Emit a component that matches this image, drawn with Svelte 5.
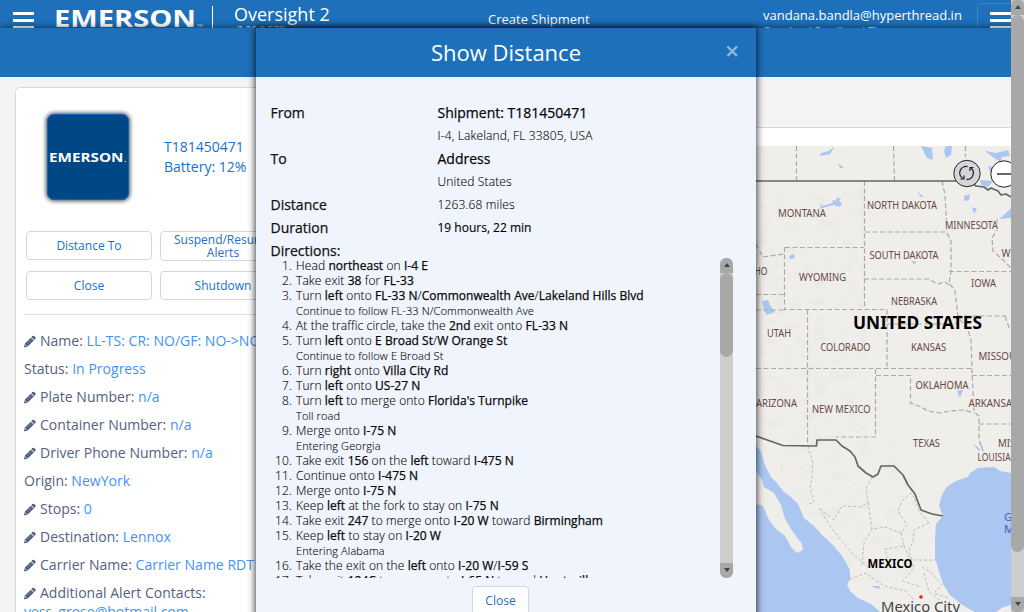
<script>
  const fields = [
    { label: 'Name:', value: 'LL-TS: CR: NO/GF: NO->NO', edit: true },
    { label: 'Status:', value: 'In Progress', edit: false },
    { label: 'Plate Number:', value: 'n/a', edit: true },
    { label: 'Container Number:', value: 'n/a', edit: true },
    { label: 'Driver Phone Number:', value: 'n/a', edit: true },
    { label: 'Origin:', value: 'NewYork', edit: false },
    { label: 'Stops:', value: '0', edit: true },
    { label: 'Destination:', value: 'Lennox', edit: true },
    { label: 'Carrier Name:', value: 'Carrier Name RDT1', edit: true },
    { label: 'Additional Alert Contacts:', value: '', edit: true }
  ];

  // Odd segments (between asterisks) are emphasised.
  const directions = [
    ['Head *northeast* on *I-4 E*'],
    ['Take exit *38* for *FL-33*'],
    ['Turn *left* onto *FL-33 N*/*Commonwealth Ave*/*Lakeland Hills Blvd*', 'Continue to follow FL-33 N/Commonwealth Ave'],
    ['At the traffic circle, take the *2nd* exit onto *FL-33 N*'],
    ['Turn *left* onto *E Broad St*/*W Orange St*', 'Continue to follow E Broad St'],
    ['Turn *right* onto *Villa City Rd*'],
    ['Turn *left* onto *US-27 N*'],
    ["Turn *left* to merge onto *Florida's Turnpike*", 'Toll road'],
    ['Merge onto *I-75 N*', 'Entering Georgia'],
    ['Take exit *156* on the *left* toward *I-475 N*'],
    ['Continue onto *I-475 N*'],
    ['Merge onto *I-75 N*'],
    ['Keep *left* at the fork to stay on *I-75 N*'],
    ['Take exit *247* to merge onto *I-20 W* toward *Birmingham*'],
    ['Keep *left* to stay on *I-20 W*', 'Entering Alabama'],
    ['Take the exit on the *left* onto *I-20 W*/*I-59 S*'],
    ['Take exit *124C* to merge onto *I-65 N* toward *Huntsville*']
  ].map(([t, note]) => ({ parts: t.split('*'), note }));

  const places = [
    ['MONTANA', 778, 217, 48], ['NORTH DAKOTA', 867, 209, 70], ['MINNESOTA', 945, 229, 53],
    ['SOUTH DAKOTA', 869.5, 259, 69], ['WYOMING', 799, 281, 47], ['IOWA', 971, 287, 25],
    ['NEBRASKA', 891, 305, 46], ['UTAH', 767, 337, 24], ['COLORADO', 820.5, 351, 50],
    ['KANSAS', 911, 351, 35], ['MISSOURI', 978.5, 359.5, 47], ['OKLAHOMA', 915.5, 389, 53],
    ['ARIZONA', 756, 407, 41], ['NEW MEXICO', 812, 413, 58.5], ['ARKANSAS', 968.5, 407, 49],
    ['TEXAS', 913, 447, 27], ['MISSISSIPPI', 998, 447, 55], ['LOUISIANA', 977.5, 461, 45],
    ['IDAHO', 740, 275, 27.5], ['WISCONSIN', 1001.5, 257, 54]
  ];
</script>

{#snippet wordmark(w)}
  <text x="0" y="19" textLength={w} lengthAdjust="spacingAndGlyphs" fill="#fff" font-family="Open Sans, sans-serif" font-weight="700" font-size="23.5">EMERSON</text>
{/snippet}

{#snippet pencil()}
  <svg class="pencil" width="12" height="13" viewBox="0 0 12 13">
    <path fill="#4f5d84" d="M8.4 1.1 Q9.2 .4 10.1 1 L11.4 2.3 Q12 3.1 11.3 3.9 L10.3 4.9 L7.3 2.1Z M6.8 2.7 L9.8 5.5 L3.6 11.4 L0 12.5 L.9 8.5Z"/>
    <path d="M1.4 9.6 L2.7 11" stroke="#fff" stroke-width=".8" fill="none"/>
    <path d="M3 8.4 L7.3 4.3" stroke="#a9b1c8" stroke-width=".6" fill="none"/>
  </svg>
{/snippet}

<div class="page">
  <header>
    <div class="burger"><i></i><i></i><i></i></div>
    <svg class="logo" width="150" height="28" viewBox="0 -8 150 28">
      {@render wordmark(142)}
      <text x="143" y="19" fill="#cfe0f2" font-family="Open Sans, sans-serif" font-size="4">TM</text>
    </svg>
    <span class="rule"></span>
    <div class="product"><span>Oversight 2</span><small>2.26.0.578</small></div>
    <div class="title">Create Shipment</div>
    <div class="user"><span>vandana.bandla@hyperthread.in</span><small>Copeland Scroll and Therm</small></div>
    <div class="menu"><div class="burger"><i></i><i></i><i></i></div></div>
  </header>
  <div class="band"></div>

  <main>
    <section class="card">
      <div class="asset">
        <div class="badge"><svg width="78" height="11" viewBox="0 0 155 21" preserveAspectRatio="none">
          {@render wordmark(148)}<circle cx="152" cy="18" r="1.5" fill="#bcd"/>
        </svg></div>
        <div class="ident"><span>T181450471</span><span>Battery: 12%</span></div>
      </div>
      <div class="actions">
        <button>Distance To</button><button class="two">Suspend/Resume Alerts</button>
        <button>Close</button><button>Shutdown</button>
      </div>
      <div class="fields">
        {#each fields as f}
          <div class="field">{#if f.edit}{@render pencil()}{/if}<span>{f.label}</span>&nbsp;<b>{f.value}</b></div>
        {/each}
        <b class="mail">yess_grose@hotmail.com</b>
      </div>
    </section>

    <section class="mapside">
      <svg class="map" width="255" height="466" viewBox="756 146 255 466">
        <defs>
          <filter id="relief" x="0" y="0" width="100%" height="100%">
            <feTurbulence type="fractalNoise" baseFrequency=".07 .11" numOctaves="3" seed="4"/>
            <feColorMatrix values="0 0 0 0 .6  0 0 0 0 .6  0 0 0 0 .58  1.5 0 0 0 -.72"/>
          </filter>
        </defs>
        <rect x="756" y="146" width="255" height="466" fill="#efeeeb"/>
        <rect x="756" y="190" width="110" height="250" filter="url(#relief)" opacity=".3"/>
        <rect x="780" y="440" width="135" height="150" filter="url(#relief)" opacity=".25"/>
        <g fill="#aac6f1">
          <path d="M756 446 L761 451 L764 463 L771 477 L776 482 L784 492 L791 497 L798 504 L804 518 L814 526 L822 535 L832 544 L842 556 L850 570 L850 580 L847 584 L850 591 L858 598 L871 604 L880 612 L756 612Z"/>
          <path d="M1011 473 L1000 471 L994 467 L978 468 L970 473 L968 477 L956 481 L948 486 L944 491 L941 498 L939 506 L943 516 L936 524 L935 540 L935 558 L939 571 L943 584 L950 595 L961 604 L971 610 L975 612 L996 612 L1003 607 L1011 605Z"/>
          <path d="M820 156 L830 154 L835 146 L829 151 L821 153Z M921 146 L932 148 L933 160 L927 158Z M946 146 L952 146 L951 155 L946 158 L944 151Z M965 161 L971 162 L978 168 L970 167Z M985 151 L996 153 L1008 150 L1010 156 L1002 157 L1001 162 L994 158Z M988 166 L997 168 L990 172Z M980 180 L993 181 L988 187 L981 185Z M838 163 L844 168 L840 168Z"/>
          <path d="M816 210 L821 207 L820 202 L822 206 L833 203 L832 200 L836 201 L837 197 L841 199 L839 201 L842 204 L840 207 L833 205 L820 209Z M964 196 L970 194 L969 200 L964 201Z M972 207 L977 209 L974 214Z M1011 208 L1005 214 L999 219 L1011 218Z M789 256 L794 254 L795 258 L790 259Z M762 301 L768 300 L770 305 L775 312 L767 315 L764 311Z M764 310 L772 310 L768 314Z M917 191 L924 197 L921 197Z M911 261 L916 261 L915 265Z M957 391 L963 389 L960 398Z M972 443 L980 449 L979 451Z M980 441 L983 448 L981 448Z M871 586 L880 586 L879 589Z"/>
        </g>
        <path fill="#efeeeb" d="M756 471 L762 480 L764 487 L774 493 L781 505 L785 519 L793 532 L802 544 L803 550 L797 553 L791 547 L785 536 L776 529 L769 520 L763 506 L756 504Z"/>
        <g fill="none" stroke="#aaa9a5" stroke-width="1.2" stroke-dasharray="5 2.5">
          <path d="M796.5 146 V180 M893.5 146 L894.5 181 M965.5 146 V157"/>
          <path d="M864.5 181 V308 M942 181 L945 195 L947 233 L951 241 L951 272 L949 283 L955 291 L958 317 L968 330 L971 340 L972 370 L974 412 L979 416 L979 440 L983 451"/>
          <path d="M865 232 H947 M785 247.5 H864 M784.5 247 V309.5 H887 V368 M756 294.5 H784 M756 244 L763 257 L784 254 M807.5 310 V446 M756 368.5 H972 M756 310 H785"/>
          <path d="M864 279 L928 279 L938 284 L945 282 L950 286 M887 324 H959 M957 316 H1006 M949 271.5 H1011 M972 375.5 H1011 M979 424 H1011 M875.5 369 V437 H836"/>
          <path d="M876 375.5 H910.5 V403 L921 407 L928 411 L940 413 L950 411 L964 410 L974 413"/>
          <path d="M997 219 L997 230 L992 238 L993 251 L1002 259 L1011 268 M1005 316 L1010 330"/>
        </g>
        <g fill="none" stroke="#bdbcb8" stroke-width="1" stroke-dasharray="3 2">
          <path d="M808 446 L813 463 L812 477 L810 488 L814 502 L807 505 M872 477 L866 488 L868 502 L861 507 L842 506 L834 520 L819 508 M868 502 L872 529 L885 527 L901 533 L907 525 L898 511 L902 501 L911 493 L915 499 M901 533 L904 546 L885 549 L887 558 M872 529 L864 543 L862 565 M819 508 L830 526 L840 539 L852 553 L868 567 M915 499 L919 511 L929 523 M929 523 L914 530 L913 541 L909 551 L912 560 L936 560 M904 546 L914 568 L903 581 L921 587 M922 567 L933 574 L942 585 L934 593 L948 598 M850 579 L866 573 L875 580 L885 586 L906 591 L914 600 M924 573 L929 592 L943 602"/>
        </g>
        <g fill="none" stroke="#666560" stroke-width="1.7" stroke-linejoin="round">
          <path d="M756 181 H970 L976 186 L984 187 L988 190 L991 188 L998 191 L1001 195 L1006 194 L1011 197"/>
          <path d="M756 436 L783 445.5 L816.5 446 L817 440 L836 440 L842 446 L850 451 L855 457 L858 466 L866 473 L873 477 L878 474 L881 466 L894 466 L903 475 L908 485 L915 494 L921 510 L932 514 L943 516"/>
        </g>
        <g fill="#674843" font-size="10.5" font-family="Noto Sans, sans-serif" stroke="#efeeeb" stroke-width="2" paint-order="stroke">
          {#each places as [name, x, y, w]}
            <text {x} {y} textLength={w} lengthAdjust="spacingAndGlyphs">{name}</text>
          {/each}
        </g>
        <g font-family="Noto Sans, sans-serif">
          <text x="853" y="329" font-size="17.5" font-weight="700" textLength="129" lengthAdjust="spacingAndGlyphs">UNITED STATES</text>
          <text x="867.5" y="568" font-size="12.5" font-weight="700" textLength="45" lengthAdjust="spacingAndGlyphs">MEXICO</text>
          <text x="881" y="611.5" font-size="14" fill="#444" textLength="79" lengthAdjust="spacingAndGlyphs">Mexico City</text>
          <text x="1004" y="521" font-size="11.5" fill="#3c63c9">Gulf of</text>
          <text x="1004" y="533" font-size="11.5" fill="#3c63c9">Mexico</text>
        </g>
        <circle cx="921" cy="597" r="2.4" fill="#e8332a" stroke="#fff"/>
        <g stroke="#222" fill="none">
          <circle cx="967" cy="173.500" r="13.200" fill="#d4d6d9"/>
          <circle cx="1004" cy="174" r="13.200" fill="#fff"/>
          <path d="M997 174 H1011" stroke-width="1.6" stroke="#444"/>
          <path d="M967.500 166.500 A6.500 6.500 0 0 0 963 178.500 M966.500 179.500 A6.500 6.500 0 0 0 971 168" stroke-width="1.3"/>
          <path d="M960.500 179 H964 V175.500 M973.500 167.500 H970 V171" stroke-width="1.2"/>
        </g>
      </svg>
    </section>
  </main>

  <div class="pagebar"><i class="up"></i><div class="thumb"></div><span></span><i class="down"></i></div>

  <div class="modal">
    <div class="head"><h1>Show Distance</h1><svg class="x" width="13" height="13" viewBox="0 0 13 13"><path d="M1.500 1.500 L11 11 M11 1.500 L1.500 11" stroke="#8fb8df" stroke-width="2.4"/></svg></div>
    <div class="body">
      <dl>
        <dt>From</dt><dd class="strong">Shipment: T181450471</dd>
        <dt></dt><dd>I-4, Lakeland, FL 33805, USA</dd>
        <dt>To</dt><dd class="strong">Address</dd>
        <dt></dt><dd>United States</dd>
        <dt>Distance</dt><dd>1263.68 miles</dd>
        <dt>Duration</dt><dd class="med">19 hours, 22 min</dd>
        <dt>Directions:</dt><dd></dd>
      </dl>
      <div class="scroll">
        <ol>
          {#each directions as d, i}
            <li><span class="num">{i + 1}.</span><div>
              <p>{#each d.parts as p, j}{#if j % 2}<b>{p}</b>{:else}{p}{/if}{/each}</p>
              {#if d.note}<p class="note">{d.note}</p>{/if}
            </div></li>
          {/each}
        </ol>
        <div class="bar"><i class="up"></i><div class="thumb"></div><span></span><i class="down"></i></div>
      </div>
      <button class="close">Close</button>
    </div>
  </div>
</div>

<style>
  :global(body) { margin: 0; overflow: hidden; }
  * { box-sizing: border-box; }
  .page { position: relative; width: 1024px; height: 612px; overflow: hidden; background: #f4f4f4; font-family: 'Open Sans', sans-serif; display: flex; flex-direction: column; white-space: nowrap; }
  header { height: 28px; flex: none; background: #1d70b9; color: #fff; display: flex; overflow: hidden; box-shadow: none; }
  .burger { margin: 12px 0 0 13px; width: 21px; flex: none; display: flex; flex-direction: column; gap: 4px; }
  .burger i { height: 3px; background: #fff; flex: none; }
  .logo { margin-left: 20px; flex: none; }
  .rule { margin: 6px 0 0 8px; width: 1px; background: #fff; flex: none; }
  .product { margin-left: 21px; width: 254px; display: flex; flex-direction: column; font-size: 18px; line-height: 28px; flex: none; }
  .product small { font-size: 10px; line-height: 12px; margin: -4px 0 0 3px; }
  .title { font-size: 13px; line-height: 39px; width: 275px; flex: none; }
  .user { font-size: 13px; line-height: 30px; width: 214px; display: flex; flex-direction: column; flex: none; }
  .user small { font-size: 11px; line-height: 14px; margin-top: -6px; }
  .menu { margin-top: 3px; width: 60px; height: 40px; border: 1px solid #3f86c6; border-radius: 4px; flex: none; }
  .menu .burger { margin: 8px 0 0 12px; width: 34px; }
  .band { height: 49px; flex: none; background: #1d70b9; box-shadow: 0 0 7px rgba(0,0,0,.65); clip-path: inset(-10px 0 0 0); position: relative; }
  main { display: flex; flex: 1; min-height: 0; }
  .card { margin: 10px 0 0 15px; width: 320px; border: 1px solid #d5d8e6; border-radius: 5px; background: #fff; overflow: hidden; height: 600px; flex: none; }
  .asset { display: flex; padding: 26px 0 0 31px; height: 143px; }
  .badge { width: 82px; height: 86px; border-radius: 7px; background: #004785; border: 1px solid #0a66b5; box-shadow: 0 0 4px 1px rgba(0,0,0,.7); display: flex; align-items: center; justify-content: center; }
  .ident { display: flex; flex-direction: column; margin: 23px 0 0 35px; color: #1a70cf; font-size: 14px; line-height: 20px; }
  .actions { display: grid; grid-template-columns: 126px 126px; gap: 10px 8px; padding-left: 10px; align-items: start; }
  button { font: 12px/13px 'Open Sans', sans-serif; color: #1a6fd0; background: #fff; border: 1px solid #d2d6e4; border-radius: 4px; height: 29px; padding: 0; }
  button.two { height: 30px; white-space: normal; padding: 0 10px; }
  .fields { margin: 14px 0 0 8px; padding-top: 12px; border-top: 1px solid #dedede; color: #55617f; font-size: 14px; }
  .field { height: 28px; line-height: 28px; display: flex; align-items: center; letter-spacing: .02px; }
  .pencil { margin-right: 4px; flex: none; }
  .fields b { font-weight: 400; color: #3f93fa; }
  .mail { display: block; line-height: 20px; margin-top: -5px; }
  .mapside { margin: 50px 0 0 421px; width: 255px; border-top: 1px solid #d5d5e3; background: #fff; padding-top: 18px; flex: none; }
  .map { display: block; }
  .pagebar { position: absolute; right: 0; top: 0; width: 13px; height: 612px; display: flex; flex-direction: column; background: #cdcdcd; }
  .pagebar .thumb { height: 537px; }
  .thumb { background: #a8a8a8; border-radius: 7px; flex: none; }
  .pagebar span, .bar span { flex: 1; }
  .up, .down { height: 15px; background: #a8a8a8; display: flex; align-items: center; justify-content: center; border-radius: 5px 5px 0 0; flex: none; }
  .down { border-radius: 0 0 5px 5px; }
  .up::after, .down::after { content: ''; margin-top: -2px; border: 3px solid transparent; border-top-width: 0; border-bottom: 4px solid #444; }
  .down::after { border-bottom-width: 0; border-top: 4px solid #444; }
  .modal { position: absolute; left: 256px; top: 28px; width: 500px; height: 620px; background: #f0f4fc; box-shadow: 0 0 7px 1px rgba(0,0,0,.75); color: #111; }
  .head { height: 49px; background: #1d70b9; color: #fff; display: grid; grid-template-columns: 30px 1fr 30px; align-items: center; }
  h1 { grid-column: 2; font-size: 22px; font-weight: 400; margin: 0; text-align: center; line-height: 49px; }
  .x { margin: -2px 0 0 0; }
  .body { padding: 24px 23px 0 14px; display: flex; flex-direction: column; }
  dl { margin: 0; padding-left: .5px; display: grid; grid-template-columns: 167px 1fr; grid-auto-rows: 23px; line-height: 23px; height: 157px; }
  dt, .strong { font-size: 14px; font-weight: 400; -webkit-text-stroke: .25px #151515; }
  dd { margin: 0; font-size: 12px; font-weight: 300; color: #000; letter-spacing: .15px; -webkit-text-stroke: .1px #000; }
  dd.strong { font-size: 14px; font-weight: 400; letter-spacing: 0; -webkit-text-stroke: .25px #151515; }
  dd.med { font-weight: 400; letter-spacing: 0; -webkit-text-stroke: .15px #151515; }
  .scroll { height: 320px; display: flex; justify-content: space-between; overflow: hidden; }
  ol { list-style: none; margin: 0; padding: 0; font-size: 12px; line-height: 15px; font-weight: 300; color: #000; letter-spacing: .11px; -webkit-text-stroke: .1px #000; }
  li { display: flex; }
  .num { width: 22px; margin-right: 4px; text-align: right; flex: none; }
  p { margin: 0; height: 15px; }
  p b { font-weight: 400; letter-spacing: .03px; -webkit-text-stroke: .25px #151515; }
  .note { font-size: 11px; }
  .bar { width: 13px; background: #cdcdcd; border-radius: 6px; overflow: hidden; display: flex; flex-direction: column; flex: none; }
  .bar .thumb { height: 84px; }
  .close { align-self: flex-start; margin: 8px 0 0 202px; width: 57px; height: 29px; }
</style>
